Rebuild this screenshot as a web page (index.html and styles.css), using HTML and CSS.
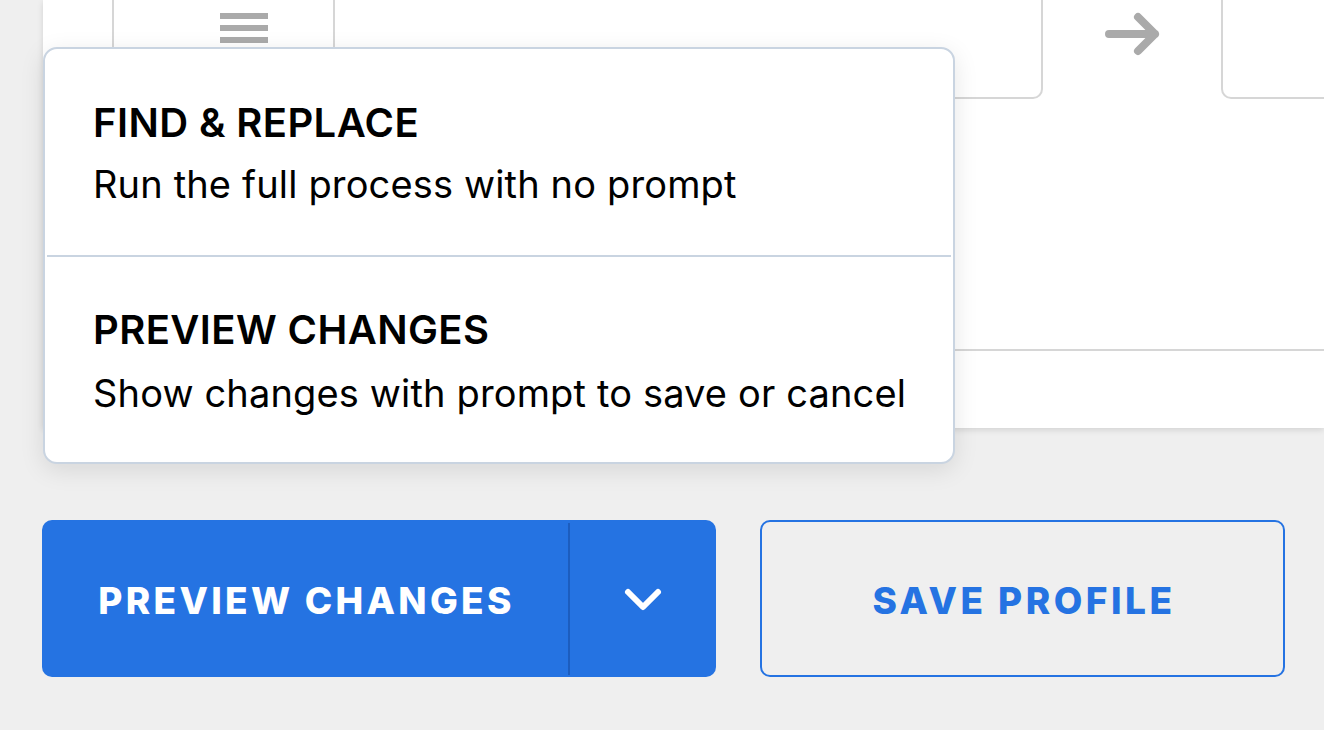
FILE: index.html
```html
<!DOCTYPE html>
<html>
<head>
<meta charset="utf-8">
<link rel="stylesheet" href="styles.css">
</head>
<body>
<div class="page">
  <div class="panel">
    <div class="inputs">
      <div class="field">
        <div class="handle">
          <svg width="48" height="30" viewBox="0 0 48 30"><rect x="0" y="0" width="48" height="6" fill="#aaaaaa"/><rect x="0" y="12" width="48" height="6" fill="#aaaaaa"/><rect x="0" y="24" width="48" height="6" fill="#aaaaaa"/></svg>
        </div>
        <div class="field-input"></div>
      </div>
      <div class="arrow">
        <svg width="56" height="44" viewBox="0 0 56 44"><path d="M4 22 H50 M33 5 L50 22 L33 39" fill="none" stroke="#aaaaaa" stroke-width="8" stroke-linecap="round" stroke-linejoin="round"/></svg>
      </div>
      <div class="field field-right"></div>
    </div>
    <div class="rule"></div>
  </div>

  <div class="actions">
    <div class="split">
      <button class="split-main">PREVIEW CHANGES</button>
      <span class="split-sep"></span>
      <button class="split-toggle">
        <svg width="40" height="26" viewBox="0 0 40 26"><path d="M5 5 L20 20 L35 5" fill="none" stroke="#ffffff" stroke-width="6" stroke-linecap="round" stroke-linejoin="round"/></svg>
      </button>
    </div>
    <button class="outline">SAVE PROFILE</button>
  </div>

  <div class="menu">
    <div class="menu-item first">
      <div class="menu-title">FIND &amp; REPLACE</div>
      <div class="menu-desc">Run the full process with no prompt</div>
    </div>
    <div class="menu-sep"></div>
    <div class="menu-item second">
      <div class="menu-title">PREVIEW CHANGES</div>
      <div class="menu-desc">Show changes with prompt to save or cancel</div>
    </div>
  </div>
</div>
</body>
</html>
```

FILE: styles.css
```css
* { box-sizing: border-box; }
html, body {
  margin: 0;
  padding: 0;
  background: #efefef;
  height: 100%;
  overflow: hidden;
}
body {
  font-family: Inter, "Liberation Sans", sans-serif;
}
.page {
  position: relative;
  width: 1324px;
  height: 730px;
}
.panel {
  margin-left: 43px;
  height: 428px;
  background: #ffffff;
  box-shadow: 0 2px 6px rgba(0, 0, 0, 0.12);
  display: flex;
  flex-direction: column;
}
.inputs {
  display: flex;
  padding-left: 69px;
  height: 99px;
}
.field {
  display: flex;
  width: 931px;
  height: 99px;
  border: 2px solid #d6d6d6;
  border-top: none;
  border-radius: 0 0 10px 10px;
}
.handle {
  width: 221px;
  border-right: 2px solid #d6d6d6;
  display: flex;
  justify-content: flex-start;
  padding-top: 13px;
  padding-left: 106px;
}
.field-input { flex: 1; }
.arrow {
  width: 178px;
  display: flex;
  justify-content: center;
  padding-top: 12px;
  padding-left: 2px;
}
.field-right {
  flex: 1;
  width: auto;
  border-right: none;
  border-radius: 0 0 0 10px;
}
.rule {
  margin-top: 250px;
  height: 2px;
  background: #d6d6d6;
}
.actions {
  display: flex;
  gap: 44px;
  margin-top: 92px;
  margin-left: 42px;
}
.split {
  display: flex;
  align-items: center;
  width: 674px;
  height: 157px;
  background: #2573e2;
  border-radius: 10px;
}
.split button {
  border: none;
  background: transparent;
  color: #ffffff;
  font-family: inherit;
  cursor: pointer;
  height: 100%;
  padding: 0;
}
.split-main {
  width: 526px;
  font-size: 37px;
  font-weight: 800;
  letter-spacing: 3.3px;
  padding: 4px 0 0 3px !important;
}
.split-sep {
  width: 2px;
  height: 152px;
  background: #1c5dbf;
}
.split-toggle {
  flex: 1;
  display: flex;
  align-items: center;
  justify-content: center;
}
.split-toggle svg { margin-top: 2px; }
.outline {
  width: 525px;
  height: 157px;
  border: 2px solid #2573e2;
  border-radius: 10px;
  background: transparent;
  color: #2573e2;
  font-family: inherit;
  font-size: 37px;
  font-weight: 800;
  letter-spacing: 3.5px;
  padding: 4px 0 0 3px;
}
.menu {
  position: absolute;
  left: 43px;
  top: 47px;
  width: 912px;
  height: 417px;
  background: #ffffff;
  border: 2px solid #c9d4e1;
  border-radius: 14px;
  box-shadow: 0 6px 24px rgba(0, 0, 0, 0.10);
  padding: 0 2px;
}
.menu-item {
  padding: 51px 0 0 46px;
  height: 206px;
}
.menu-item.second {
  padding-top: 50px;
}
.menu-title {
  font-size: 40px;
  font-weight: 600;
  letter-spacing: 0.4px;
  line-height: 46px;
  color: #000000;
}
.menu-desc {
  font-size: 38px;
  font-weight: 400;
  letter-spacing: 0.15px;
  line-height: 46px;
  margin-top: 17px;
  color: #000000;
}
.menu-item.first .menu-desc {
  margin-top: 15px;
}
.menu-sep {
  height: 2px;
  background: #c9d4e1;
}
```
